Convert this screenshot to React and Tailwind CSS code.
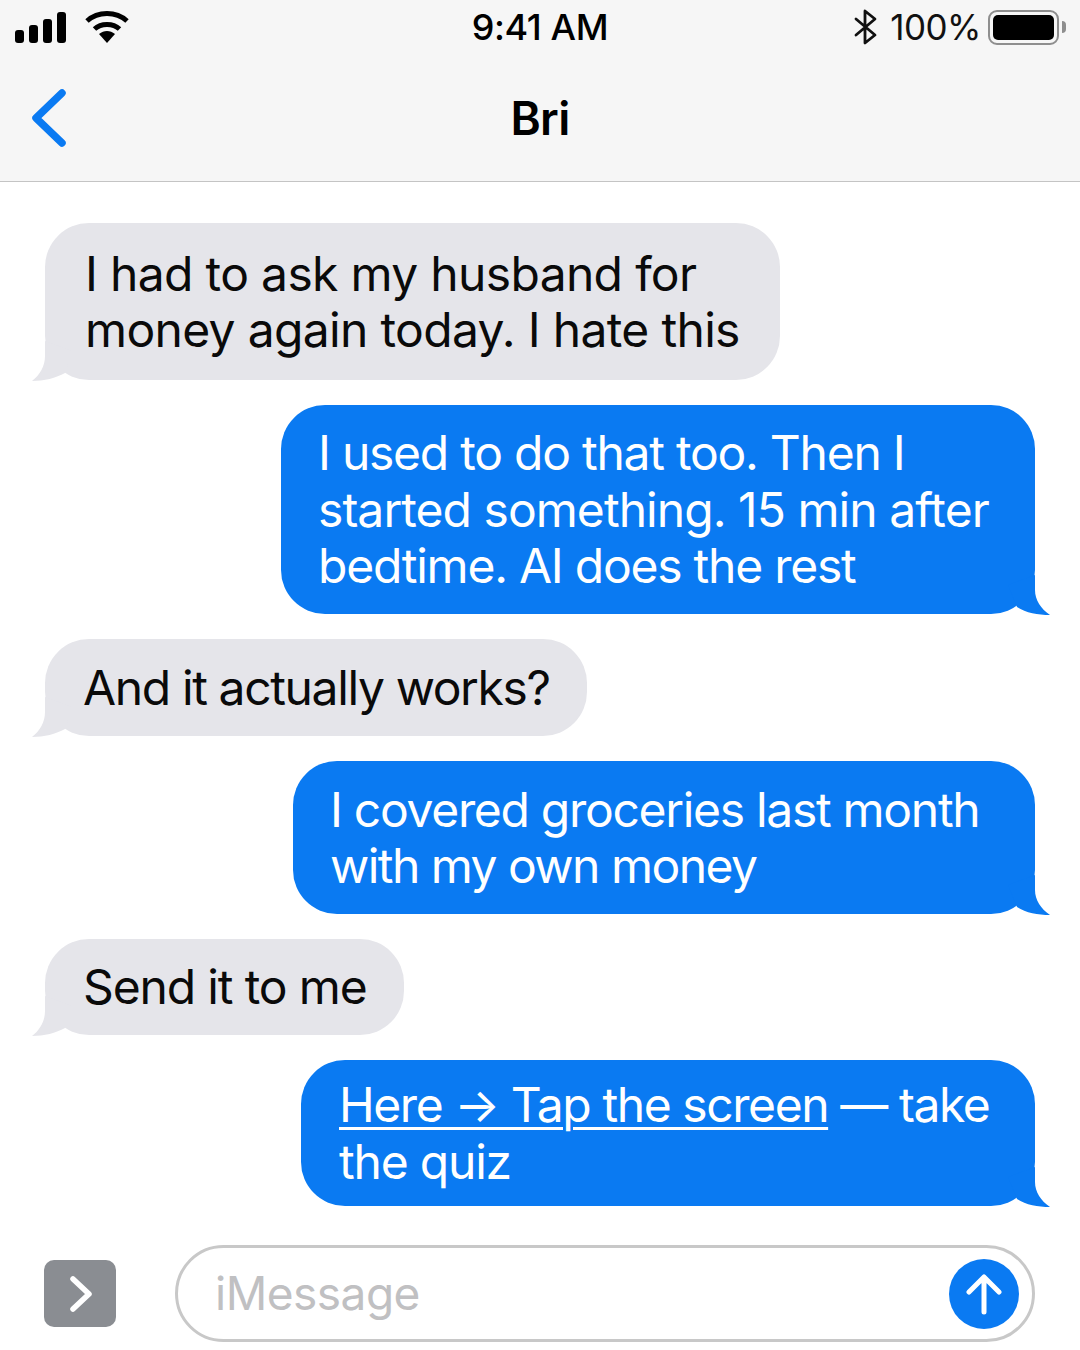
import React from 'react';

const Tail = ({ side, color }) =>
  side === 'left' ? (
    <svg width="40" height="40" viewBox="0 0 40 40" className="absolute left-[-13px] bottom-[-1px]">
      <path d="M13 0 L13 15 C13 25 8 34 0 40 C12 40 24 37 33 32 L40 10 Z" fill={color} />
    </svg>
  ) : (
    <svg width="42" height="40" viewBox="0 0 42 40" className="absolute right-[-15px] bottom-[-1px]">
      <path d="M27 0 L27 15 C27 25 33 34 42 40 C30 40 18 38 9 32 L0 10 Z" fill={color} />
    </svg>
  );

const Bubble = ({ side, className, children }) => {
  const left = side === 'left';
  return (
    <div
      className={`relative flex flex-col justify-center shrink-0 rounded-[44px] text-[48px] leading-[56.5px] whitespace-nowrap ${
        left ? 'self-start ml-[45px] bg-[#e5e5ea] text-[#0a0a0a]' : 'self-end mr-[45px] bg-[#0a7af2] text-white'
      } ${className}`}
    >
      <Tail side={side} color={left ? '#e5e5ea' : '#0a7af2'} />
      <div className="relative pt-[1px]">{children}</div>
    </div>
  );
};

const SignalIcon = () => (
  <svg width="52" height="32" viewBox="0 0 52 32" fill="#000">
    <rect x="1" y="19" width="9" height="13" rx="3" />
    <rect x="15" y="14" width="9" height="18" rx="3" />
    <rect x="29" y="8" width="9" height="24" rx="3" />
    <rect x="43" y="1" width="9" height="31" rx="3" />
  </svg>
);

const WifiIcon = () => (
  <svg width="46" height="34" viewBox="0 0 46 34" fill="none" stroke="#000" strokeWidth="5">
    <path d="M3 11 C14 1 32 1 43 11" />
    <path d="M10.5 19 C17 13 29 13 35.500 19" />
    <path d="M15 24 L23 33 L31 24 C26 20 20 20 15 24 Z" fill="#000" stroke="none" />
  </svg>
);

const BluetoothIcon = () => (
  <svg width="24" height="36" viewBox="0 0 24 36" fill="none" stroke="#111" strokeWidth="2.800" strokeLinejoin="round" strokeLinecap="round">
    <path d="M2 10 L21 26 L11 34 L11 2 L21 10 L2 26" />
  </svg>
);

const BatteryIcon = () => (
  <div className="flex items-center gap-[3px]">
    <div className="w-[71px] h-[35px] rounded-[9px] border-2 border-[#8e8e8e] p-[3px]">
      <div className="w-full h-full rounded-[5px] bg-black" />
    </div>
    <div className="w-[4px] h-[12px] rounded-r-[4px] bg-[#8e8e8e]" />
  </div>
);

const App = () => {
  return (
    <div className="w-[1080px] h-[1350px] overflow-hidden flex flex-col bg-white font-['Inter',sans-serif] text-black">
      {/* Header */}
      <div className="h-[182px] shrink-0 bg-[#f6f6f6] border-b border-[#c4c4c4] flex flex-col">
        <div className="h-[54px] grid grid-cols-3 items-center px-[14px]">
          <div className="flex items-center gap-[18px]">
            <SignalIcon />
            <WifiIcon />
          </div>
          <div className="text-center text-[36px] font-medium tracking-[-0.4px]">9:41 AM</div>
          <div className="flex items-center justify-end gap-[7px]">
            <div className="mr-[5px] flex">
              <BluetoothIcon />
            </div>
            <span className="text-[35px] tracking-[-0.5px] text-[#111]">100%</span>
            <BatteryIcon />
          </div>
        </div>
        <div className="flex-1 grid grid-cols-3 items-center">
          <div className="pl-[31px] flex">
            <svg width="38" height="62" viewBox="0 0 38 62" fill="none" stroke="#0a7af2" strokeWidth="7.500" strokeLinecap="round" strokeLinejoin="round">
              <path d="M31 6 L5 31 L31 56" />
            </svg>
          </div>
          <div className="pt-[2px] text-center text-[46px] font-semibold tracking-[-0.7px]">Bri</div>
        </div>
      </div>

      {/* Messages */}
      <div className="flex-1 flex flex-col gap-[25px] pt-[41px]">
        <Bubble side="left" className="w-[735px] h-[157px] pl-[40px] tracking-[-0.67px]">
          I had to ask my husband for<br />money again today. I hate this
        </Bubble>
        <Bubble side="right" className="w-[754px] h-[209px] pl-[37px]">
          <div className="tracking-[-1.25px]">I used to do that too. Then I</div>
          <div className="tracking-[-0.95px]">started something. 15 min after</div>
          <div className="tracking-[-1.24px]">bedtime. AI does the rest</div>
        </Bubble>
        <Bubble side="left" className="w-[542px] h-[97px] pl-[38px] tracking-[-1.37px]">
          And it actually works?
        </Bubble>
        <Bubble side="right" className="w-[742px] h-[153px] pl-[37px]">
          <div className="tracking-[-1.3px]">I covered groceries last month</div>
          <div className="tracking-[-1.54px]">with my own money</div>
        </Bubble>
        <Bubble side="left" className="w-[359px] h-[96px] pl-[38px] tracking-[-1.14px]">
          Send it to me
        </Bubble>
        <Bubble side="right" className="w-[734px] h-[146px] pl-[38px]">
          <div className="tracking-[-1.42px]">
            <span className="underline decoration-[2.5px] underline-offset-[5px]">Here → Tap the screen</span> — take
          </div>
          <div className="tracking-[-1.2px]">the quiz</div>
        </Bubble>
      </div>

      {/* Input bar */}
      <div className="h-[105px] shrink-0 flex items-start pl-[44px] pr-[45px]">
        <div className="mt-[15px] w-[72px] h-[67px] shrink-0 rounded-[10px] bg-[#8a8d92] flex items-center justify-center">
          <svg width="26" height="38" viewBox="0 0 26 38" fill="none" stroke="#fff" strokeWidth="5.500" strokeLinecap="round" strokeLinejoin="round">
            <path d="M6 4 L22 19 L6 34" />
          </svg>
        </div>
        <div className="ml-[59px] flex-1 h-[97px] rounded-[49px] border-[3px] border-[#c8c8c8] flex items-center justify-between pl-[37px] pr-[13px]">
          <span className="text-[46px] tracking-[-0.5px] text-[#c0c0c2]">iMessage</span>
          <div className="w-[70px] h-[70px] rounded-full bg-[#0a7af2] flex items-center justify-center">
            <svg width="36" height="42" viewBox="0 0 36 42" fill="none" stroke="#fff" strokeWidth="5" strokeLinecap="round" strokeLinejoin="round">
              <path d="M18 39 L18 4 M3 19 L18 4 L33 19" />
            </svg>
          </div>
        </div>
      </div>
    </div>
  );
};

export default App;
